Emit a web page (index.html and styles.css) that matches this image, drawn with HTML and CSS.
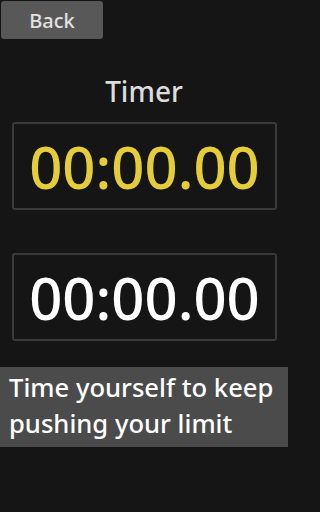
FILE: index.html
```html
<!DOCTYPE html>
<html>
<head>
<meta charset="utf-8">
<link rel="stylesheet" href="styles.css">
</head>
<body>
<div class="screen">
  <div class="topbar"><div class="back">Back</div></div>
  <div class="title">Timer</div>
  <div class="box yellow">00:00.00</div>
  <div class="box white">00:00.00</div>
  <div class="band">Time yourself to keep pushing your limit</div>
</div>
</body>
</html>
```
FILE: styles.css
```css
html, body { margin: 0; padding: 0; background: #151515; }
.screen {
  width: 288px; height: 512px; overflow: hidden;
  font-family: "Noto Sans", "Open Sans", sans-serif;
  font-weight: 500;
  display: flex; flex-direction: column;
}
.topbar { padding: 1px; height: 38px; }
.back {
  width: 102px; height: 38px; box-sizing: border-box;
  background: #585858; border-radius: 3px;
  color: #e2e2e2; font-size: 20px;
  display: flex; align-items: center; justify-content: center;
}
.title {
  margin-top: 31px; height: 40px; line-height: 40px;
  text-align: center; color: #dcdcdc; font-size: 28px;
}
.box {
  margin: 11px 11px 0 12px; height: 88px; box-sizing: border-box;
  border: 2px solid #3a3a3a; border-radius: 3px;
  display: flex; align-items: center; justify-content: center;
  font-size: 58px; letter-spacing: 0;
}
.yellow { color: #e4cd38; }
.white { color: #ffffff; margin-top: 43px; }
.band {
  margin-top: 26px; height: 80px; box-sizing: border-box;
  background: #4b4b4b; color: #ffffff;
  font-size: 25.6px; line-height: 36px; padding: 3px 4px 0 9px;
}
```
